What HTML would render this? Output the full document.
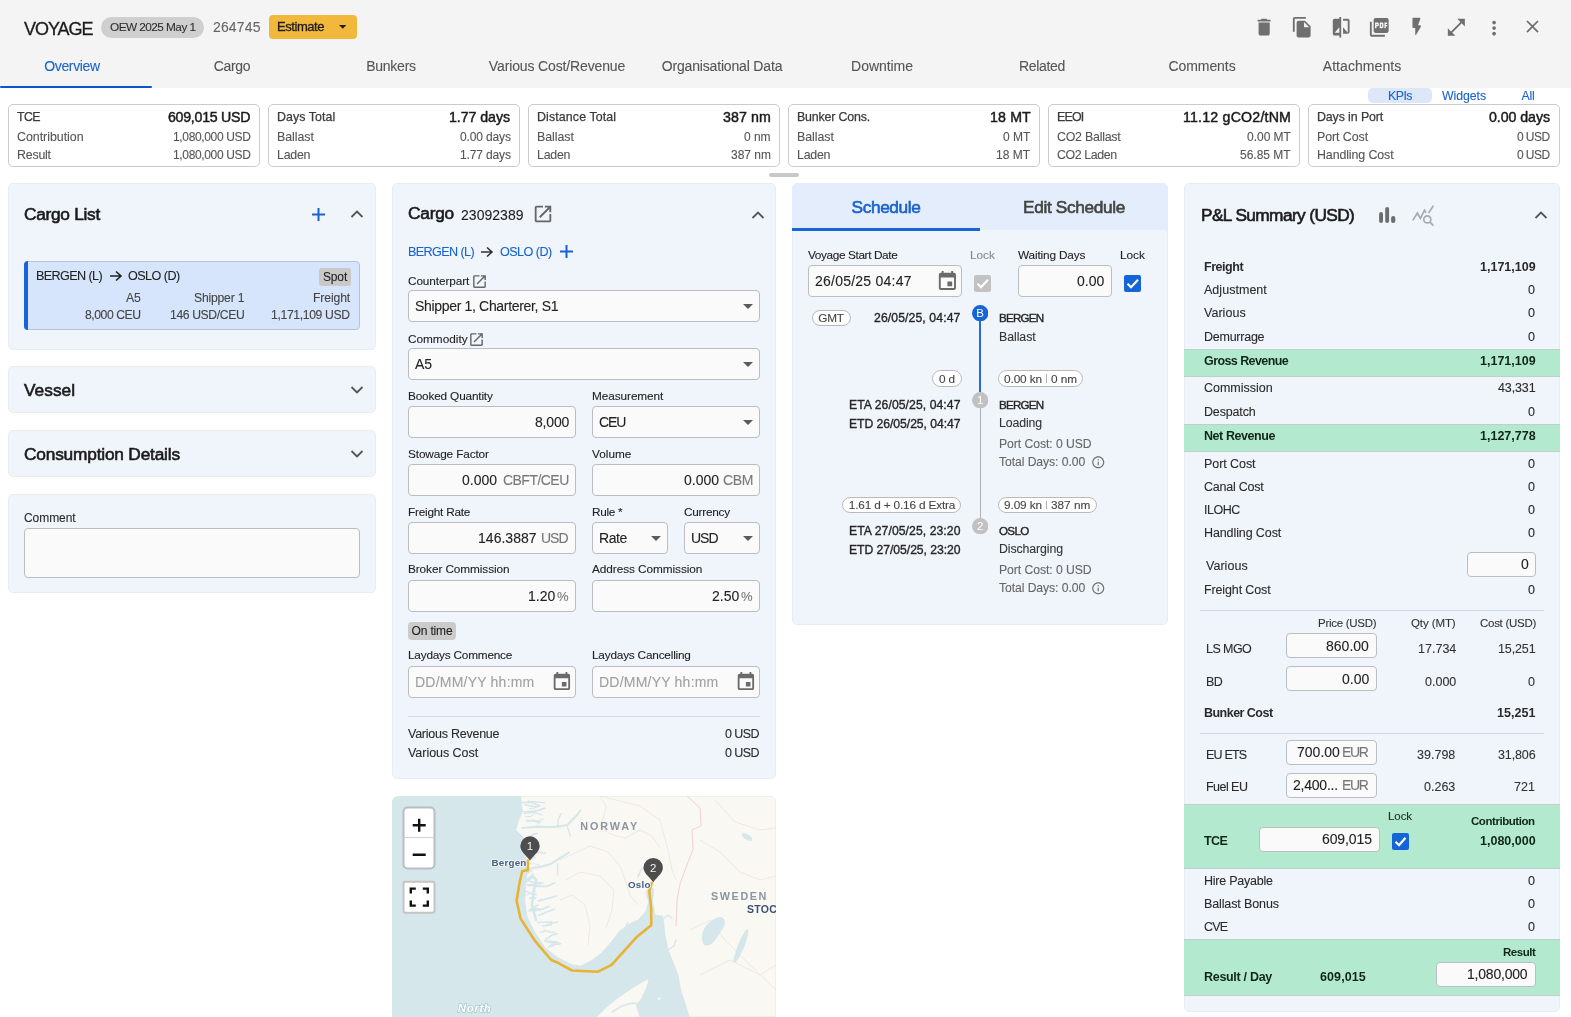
<!DOCTYPE html>
<html><head><meta charset="utf-8"><title>Voyage</title>
<style>
html,body{margin:0;padding:0;}
body{width:1571px;height:1017px;overflow:hidden;position:relative;background:#fff;font-family:"Liberation Sans",sans-serif;}
.t{position:absolute;white-space:nowrap;-webkit-font-smoothing:antialiased;will-change:transform;}
.b{position:absolute;}
</style></head><body>
<div class="b" style="left:0px;top:0px;width:1571px;height:88px;background:#f4f4f4;"></div>
<div class="t" style="top:19.76px;font-size:18px;line-height:18px;color:#1c1c1c;-webkit-text-stroke:0.3px #1c1c1c;letter-spacing:-1.032px;left:23.70px;">VOYAGE</div>
<div class="b" style="left:101px;top:17px;width:103px;height:21px;background:#cfcfcf;border-radius:11px;"></div>
<div class="t" style="top:22.11px;font-size:11.8px;line-height:11.8px;color:#2e2e2e;-webkit-text-stroke:0.1px #2e2e2e;letter-spacing:-0.544px;left:109.50px;">OEW 2025 May 1</div>
<div class="t" style="top:19.95px;font-size:14px;line-height:14px;color:#666;-webkit-text-stroke:0.1px #666;letter-spacing:0.148px;left:212.60px;">264745</div>
<div class="b" style="left:269px;top:15px;width:88px;height:24px;background:#f1b83b;border-radius:4px;"></div>
<div class="t" style="top:20.20px;font-size:13px;line-height:13px;color:#1e1e1e;-webkit-text-stroke:0.3px #1e1e1e;letter-spacing:-0.446px;left:277.00px;">Estimate</div>
<svg class="b" style="left:339.3px;top:25.45px;" width="7.4" height="3.7" viewBox="0 0 7.4 3.7"><path d="M0 0H7.4L3.7 3.7z" fill="#1e1e1e"/></svg>
<svg class="b" style="left:1253.15px;top:15.6px;" width="22.3" height="22.3" viewBox="0 0 24 24"><path fill="#6f6f6f" d="M6 19c0 1.1.9 2 2 2h8c1.1 0 2-.9 2-2V7H6v12zM19 4h-3.5l-1-1h-5l-1 1H5v2h14V4z"/></svg>
<svg class="b" style="left:1290.9px;top:15.97px;" width="22.4" height="22.4" viewBox="0 0 24 24"><path fill="#6f6f6f" d="M16 1H4c-1.1 0-2 .9-2 2v14h2V3h12V1zm-1 4l6 6v10c0 1.1-.9 2-2 2H7.99C6.89 23 6 22.1 6 21l.01-14c0-1.1.89-2 1.99-2h7zm-1 7h5.5L14 6.5V12z"/></svg>
<svg class="b" style="left:1330px;top:15.97px;" width="22.4" height="22.4" viewBox="0 0 24 24"><path fill="#6f6f6f" d="M10 3H5c-1.11 0-2 .9-2 2v14c0 1.1.89 2 2 2h5v2h2V1h-2v2zm0 15H5l5-6v6zm9-15h-5v2h5v13l-5-6v7h5c1.1 0 2-.9 2-2V5c0-1.1-.9-2-2-2z"/></svg>
<svg class="b" style="left:1367.9px;top:15.8px;" width="22.5" height="22.5" viewBox="0 0 24 24"><path fill="#6f6f6f" d="M20 2H8c-1.1 0-2 .9-2 2v12c0 1.1.9 2 2 2h12c1.1 0 2-.9 2-2V4c0-1.1-.9-2-2-2zm-8.5 7.5c0 .83-.67 1.5-1.5 1.5H9v2H7.5V7H10c.83 0 1.5.67 1.5 1.5v1zm5 2c0 .83-.67 1.5-1.5 1.5h-2.5V7H15c.83 0 1.5.67 1.5 1.5v3zm4-3H19v1h1.5V11H19v2h-1.5V7h3v1.5zM9 9.5h1v-1H9v1zM4 6H2v14c0 1.1.9 2 2 2h14v-2H4V6zm10 5.5h1v-3h-1v3z"/></svg>
<svg class="b" style="left:1405.8px;top:15.85px;" width="22.2" height="22.2" viewBox="0 0 24 24"><path fill="#6f6f6f" d="M7 3v9c0 .55.45 1 1 1h2v7.15c0 .51.67.69.93.25l5.19-8.9c.39-.67-.09-1.5-.86-1.5H13l2.49-6.65c.25-.65-.23-1.35-.93-1.35H8c-.55 0-1 .45-1 1z"/></svg>
<svg class="b" style="left:1444.6px;top:15.86px;" width="22.7" height="22.7" viewBox="0 0 24 24"><path fill="#6f6f6f" d="M21 11V3h-8l3.29 3.29-10 10L3 13v8h8l-3.29-3.29 10-10z"/></svg>
<svg class="b" style="left:1483.1px;top:16.5px;" width="22.2" height="22.2" viewBox="0 0 24 24"><path fill="#6f6f6f" d="M12 8c1.1 0 2-.9 2-2s-.9-2-2-2-2 .9-2 2 .9 2 2 2zm0 2c-1.1 0-2 .9-2 2s.9 2 2 2 2-.9 2-2-.9-2-2-2zm0 6c-1.1 0-2 .9-2 2s.9 2 2 2 2-.9 2-2-.9-2-2-2z"/></svg>
<svg class="b" style="left:1522.4px;top:16.3px;" width="21" height="21" viewBox="0 0 24 24"><path fill="#6f6f6f" d="M19 6.41L17.59 5 12 10.59 6.41 5 5 6.41 10.59 12 5 17.59 6.41 19 12 13.41 17.59 19 19 17.59 13.41 12z"/></svg>
<div class="t" style="top:59.45px;font-size:14px;line-height:14px;color:#1a62cc;-webkit-text-stroke:0.1px #1a62cc;letter-spacing:-0.349px;left:-328.42px;width:800px;text-align:center;">Overview</div>
<div class="t" style="top:59.45px;font-size:14px;line-height:14px;color:#555;-webkit-text-stroke:0.1px #555;letter-spacing:-0.295px;left:-168.45px;width:800px;text-align:center;">Cargo</div>
<div class="t" style="top:59.45px;font-size:14px;line-height:14px;color:#555;-webkit-text-stroke:0.1px #555;letter-spacing:-0.245px;left:-8.62px;width:800px;text-align:center;">Bunkers</div>
<div class="t" style="top:59.45px;font-size:14px;line-height:14px;color:#555;-webkit-text-stroke:0.1px #555;letter-spacing:-0.138px;left:156.93px;width:800px;text-align:center;">Various Cost/Revenue</div>
<div class="t" style="top:59.45px;font-size:14px;line-height:14px;color:#555;-webkit-text-stroke:0.1px #555;letter-spacing:-0.168px;left:321.92px;width:800px;text-align:center;">Organisational Data</div>
<div class="t" style="top:59.45px;font-size:14px;line-height:14px;color:#555;-webkit-text-stroke:0.1px #555;letter-spacing:-0.055px;left:481.97px;width:800px;text-align:center;">Downtime</div>
<div class="t" style="top:59.45px;font-size:14px;line-height:14px;color:#555;-webkit-text-stroke:0.1px #555;letter-spacing:-0.319px;left:642.24px;width:800px;text-align:center;">Related</div>
<div class="t" style="top:59.45px;font-size:14px;line-height:14px;color:#555;-webkit-text-stroke:0.1px #555;letter-spacing:-0.062px;left:802.17px;width:800px;text-align:center;">Comments</div>
<div class="t" style="top:59.45px;font-size:14px;line-height:14px;color:#555;-webkit-text-stroke:0.1px #555;letter-spacing:0.059px;left:962.03px;width:800px;text-align:center;">Attachments</div>
<div class="b" style="left:0px;top:86px;width:152px;height:2px;background:#0d55cc;border-radius:1px;"></div>
<div class="b" style="left:1368px;top:88px;width:64px;height:15px;background:#dce8fa;border-radius:5px;"></div>
<div class="t" style="top:89.79px;font-size:12.3px;line-height:12.3px;color:#1a62cc;-webkit-text-stroke:0.1px #1a62cc;letter-spacing:-0.494px;left:999.75px;width:800px;text-align:center;">KPIs</div>
<div class="t" style="top:89.79px;font-size:12.3px;line-height:12.3px;color:#1a62cc;-webkit-text-stroke:0.1px #1a62cc;letter-spacing:-0.061px;left:1063.97px;width:800px;text-align:center;">Widgets</div>
<div class="t" style="top:89.79px;font-size:12.3px;line-height:12.3px;color:#1a62cc;-webkit-text-stroke:0.1px #1a62cc;letter-spacing:-0.223px;left:1127.89px;width:800px;text-align:center;">All</div>
<div class="b" style="left:8px;top:104px;width:252px;height:63px;background:#fff;border:1px solid #cbcbcb;box-sizing:border-box;border-radius:5px;"></div>
<div class="t" style="top:110.70px;font-size:12.4px;line-height:12.4px;color:#3a3a3a;-webkit-text-stroke:0.25px #3a3a3a;letter-spacing:-0.652px;left:16.70px;">TCE</div>
<div class="t" style="top:109.98px;font-size:14.2px;line-height:14.2px;color:#1a1a1a;-webkit-text-stroke:0.45px #1a1a1a;letter-spacing:-0.271px;right:1320.77px;text-align:right;">609,015 USD</div>
<div class="t" style="top:130.50px;font-size:12.4px;line-height:12.4px;color:#555;-webkit-text-stroke:0.1px #555;letter-spacing:-0.019px;left:16.70px;">Contribution</div>
<div class="t" style="top:130.84px;font-size:12px;line-height:12px;color:#555;-webkit-text-stroke:0.1px #555;letter-spacing:-0.346px;right:1320.85px;text-align:right;">1,080,000 USD</div>
<div class="t" style="top:148.50px;font-size:12.4px;line-height:12.4px;color:#555;-webkit-text-stroke:0.1px #555;letter-spacing:-0.216px;left:16.70px;">Result</div>
<div class="t" style="top:148.84px;font-size:12px;line-height:12px;color:#555;-webkit-text-stroke:0.1px #555;letter-spacing:-0.346px;right:1320.85px;text-align:right;">1,080,000 USD</div>
<div class="b" style="left:268px;top:104px;width:252px;height:63px;background:#fff;border:1px solid #cbcbcb;box-sizing:border-box;border-radius:5px;"></div>
<div class="t" style="top:110.70px;font-size:12.4px;line-height:12.4px;color:#3a3a3a;-webkit-text-stroke:0.25px #3a3a3a;letter-spacing:0.072px;left:276.70px;">Days Total</div>
<div class="t" style="top:109.98px;font-size:14.2px;line-height:14.2px;color:#1a1a1a;-webkit-text-stroke:0.45px #1a1a1a;letter-spacing:-0.058px;right:1060.56px;text-align:right;">1.77 days</div>
<div class="t" style="top:130.50px;font-size:12.4px;line-height:12.4px;color:#555;-webkit-text-stroke:0.1px #555;letter-spacing:-0.040px;left:276.70px;">Ballast</div>
<div class="t" style="top:130.84px;font-size:12px;line-height:12px;color:#555;-webkit-text-stroke:0.1px #555;letter-spacing:-0.134px;right:1060.63px;text-align:right;">0.00 days</div>
<div class="t" style="top:148.50px;font-size:12.4px;line-height:12.4px;color:#555;-webkit-text-stroke:0.1px #555;letter-spacing:-0.259px;left:276.70px;">Laden</div>
<div class="t" style="top:148.84px;font-size:12px;line-height:12px;color:#555;-webkit-text-stroke:0.1px #555;letter-spacing:-0.134px;right:1060.63px;text-align:right;">1.77 days</div>
<div class="b" style="left:528px;top:104px;width:252px;height:63px;background:#fff;border:1px solid #cbcbcb;box-sizing:border-box;border-radius:5px;"></div>
<div class="t" style="top:110.70px;font-size:12.4px;line-height:12.4px;color:#3a3a3a;-webkit-text-stroke:0.25px #3a3a3a;letter-spacing:0.117px;left:536.70px;">Distance Total</div>
<div class="t" style="top:109.98px;font-size:14.2px;line-height:14.2px;color:#1a1a1a;-webkit-text-stroke:0.45px #1a1a1a;letter-spacing:0.100px;right:800.40px;text-align:right;">387 nm</div>
<div class="t" style="top:130.50px;font-size:12.4px;line-height:12.4px;color:#555;-webkit-text-stroke:0.1px #555;letter-spacing:-0.040px;left:536.70px;">Ballast</div>
<div class="t" style="top:130.84px;font-size:12px;line-height:12px;color:#555;-webkit-text-stroke:0.1px #555;letter-spacing:-0.055px;right:800.56px;text-align:right;">0 nm</div>
<div class="t" style="top:148.50px;font-size:12.4px;line-height:12.4px;color:#555;-webkit-text-stroke:0.1px #555;letter-spacing:-0.259px;left:536.70px;">Laden</div>
<div class="t" style="top:148.84px;font-size:12px;line-height:12px;color:#555;-webkit-text-stroke:0.1px #555;letter-spacing:-0.015px;right:800.52px;text-align:right;">387 nm</div>
<div class="b" style="left:788px;top:104px;width:252px;height:63px;background:#fff;border:1px solid #cbcbcb;box-sizing:border-box;border-radius:5px;"></div>
<div class="t" style="top:110.70px;font-size:12.4px;line-height:12.4px;color:#3a3a3a;-webkit-text-stroke:0.25px #3a3a3a;letter-spacing:-0.178px;left:796.70px;">Bunker Cons.</div>
<div class="t" style="top:109.98px;font-size:14.2px;line-height:14.2px;color:#1a1a1a;-webkit-text-stroke:0.45px #1a1a1a;letter-spacing:0.139px;right:540.36px;text-align:right;">18 MT</div>
<div class="t" style="top:130.50px;font-size:12.4px;line-height:12.4px;color:#555;-webkit-text-stroke:0.1px #555;letter-spacing:-0.040px;left:796.70px;">Ballast</div>
<div class="t" style="top:130.84px;font-size:12px;line-height:12px;color:#555;-webkit-text-stroke:0.1px #555;right:540.50px;text-align:right;">0 MT</div>
<div class="t" style="top:148.50px;font-size:12.4px;line-height:12.4px;color:#555;-webkit-text-stroke:0.1px #555;letter-spacing:-0.259px;left:796.70px;">Laden</div>
<div class="t" style="top:148.84px;font-size:12px;line-height:12px;color:#555;-webkit-text-stroke:0.1px #555;letter-spacing:0.015px;right:540.49px;text-align:right;">18 MT</div>
<div class="b" style="left:1048px;top:104px;width:252px;height:63px;background:#fff;border:1px solid #cbcbcb;box-sizing:border-box;border-radius:5px;"></div>
<div class="t" style="top:110.70px;font-size:12.4px;line-height:12.4px;color:#3a3a3a;-webkit-text-stroke:0.25px #3a3a3a;letter-spacing:-0.813px;left:1056.70px;">EEOI</div>
<div class="t" style="top:109.98px;font-size:14.2px;line-height:14.2px;color:#1a1a1a;-webkit-text-stroke:0.45px #1a1a1a;letter-spacing:0.193px;right:280.31px;text-align:right;">11.12 gCO2/tNM</div>
<div class="t" style="top:130.50px;font-size:12.4px;line-height:12.4px;color:#555;-webkit-text-stroke:0.1px #555;letter-spacing:-0.234px;left:1056.70px;">CO2 Ballast</div>
<div class="t" style="top:130.84px;font-size:12px;line-height:12px;color:#555;-webkit-text-stroke:0.1px #555;letter-spacing:-0.016px;right:280.52px;text-align:right;">0.00 MT</div>
<div class="t" style="top:148.50px;font-size:12.4px;line-height:12.4px;color:#555;-webkit-text-stroke:0.1px #555;letter-spacing:-0.399px;left:1056.70px;">CO2 Laden</div>
<div class="t" style="top:148.84px;font-size:12px;line-height:12px;color:#555;-webkit-text-stroke:0.1px #555;letter-spacing:-0.006px;right:280.51px;text-align:right;">56.85 MT</div>
<div class="b" style="left:1308px;top:104px;width:252px;height:63px;background:#fff;border:1px solid #cbcbcb;box-sizing:border-box;border-radius:5px;"></div>
<div class="t" style="top:110.70px;font-size:12.4px;line-height:12.4px;color:#3a3a3a;-webkit-text-stroke:0.25px #3a3a3a;letter-spacing:-0.110px;left:1316.70px;">Days in Port</div>
<div class="t" style="top:109.98px;font-size:14.2px;line-height:14.2px;color:#1a1a1a;-webkit-text-stroke:0.45px #1a1a1a;letter-spacing:-0.058px;right:20.56px;text-align:right;">0.00 days</div>
<div class="t" style="top:130.50px;font-size:12.4px;line-height:12.4px;color:#555;-webkit-text-stroke:0.1px #555;letter-spacing:-0.069px;left:1316.70px;">Port Cost</div>
<div class="t" style="top:130.84px;font-size:12px;line-height:12px;color:#555;-webkit-text-stroke:0.1px #555;letter-spacing:-0.571px;right:21.07px;text-align:right;">0 USD</div>
<div class="t" style="top:148.50px;font-size:12.4px;line-height:12.4px;color:#555;-webkit-text-stroke:0.1px #555;letter-spacing:-0.105px;left:1316.70px;">Handling Cost</div>
<div class="t" style="top:148.84px;font-size:12px;line-height:12px;color:#555;-webkit-text-stroke:0.1px #555;letter-spacing:-0.571px;right:21.07px;text-align:right;">0 USD</div>
<div class="b" style="left:769px;top:173px;width:30px;height:4px;background:#c8c8c8;border-radius:2px;"></div>
<div class="b" style="left:8px;top:183px;width:368px;height:167px;background:#f0f5fc;border:1px solid #e8edf4;box-sizing:border-box;border-radius:5px;"></div>
<div class="t" style="top:205.96px;font-size:17.3px;line-height:17.3px;color:#1a1a1a;-webkit-text-stroke:0.6px #1a1a1a;letter-spacing:-0.284px;left:24.20px;">Cargo List</div>
<svg class="b" style="left:311.5px;top:208.0px;" width="13" height="13" viewBox="0 0 13 13"><path d="M6.5 0V13M0 6.5H13" stroke="#1a62cc" stroke-width="2" fill="none"/></svg>
<svg class="b" style="left:350px;top:209px;" width="14" height="10" viewBox="0 0 14 10"><path d="M1.5 8 L7 2.5 L12.5 8" fill="none" stroke="#555" stroke-width="1.8"/></svg>
<div class="b" style="left:24px;top:261px;width:336px;height:69px;background:#d6e5fb;border:1px solid #b7c3d3;box-sizing:border-box;border-radius:4px;"></div>
<div class="b" style="left:24px;top:261px;width:4px;height:69px;background:#1565d8;border-radius:4px 0 0 4px;"></div>
<div class="t" style="top:269.73px;font-size:12.6px;line-height:12.6px;color:#222;-webkit-text-stroke:0.1px #222;letter-spacing:-0.602px;left:36.00px;">BERGEN (L)</div>
<svg class="b" style="left:109px;top:270px;" width="14" height="12" viewBox="0 0 14 12"><path d="M1 6H12M7 1.5L12 6L7 10.5" stroke="#222" stroke-width="1.6" fill="none"/></svg>
<div class="t" style="top:269.73px;font-size:12.6px;line-height:12.6px;color:#222;-webkit-text-stroke:0.1px #222;letter-spacing:-0.540px;left:127.50px;">OSLO (D)</div>
<div class="b" style="left:319px;top:268px;width:32px;height:18px;background:#c9c9c9;border-radius:3px;"></div>
<div class="t" style="top:271.34px;font-size:12px;line-height:12px;color:#222;-webkit-text-stroke:0.1px #222;letter-spacing:-0.117px;left:-65.06px;width:800px;text-align:center;">Spot</div>
<div class="t" style="top:292.17px;font-size:12.2px;line-height:12.2px;color:#444;-webkit-text-stroke:0.1px #444;letter-spacing:-0.059px;right:1430.56px;text-align:right;">A5</div>
<div class="t" style="top:292.17px;font-size:12.2px;line-height:12.2px;color:#444;-webkit-text-stroke:0.1px #444;letter-spacing:-0.218px;right:1326.42px;text-align:right;">Shipper 1</div>
<div class="t" style="top:292.17px;font-size:12.2px;line-height:12.2px;color:#444;-webkit-text-stroke:0.1px #444;letter-spacing:-0.124px;right:1221.12px;text-align:right;">Freight</div>
<div class="t" style="top:308.87px;font-size:12.2px;line-height:12.2px;color:#444;-webkit-text-stroke:0.1px #444;letter-spacing:-0.457px;right:1430.96px;text-align:right;">8,000 CEU</div>
<div class="t" style="top:308.87px;font-size:12.2px;line-height:12.2px;color:#444;-webkit-text-stroke:0.1px #444;letter-spacing:-0.384px;right:1326.58px;text-align:right;">146 USD/CEU</div>
<div class="t" style="top:308.87px;font-size:12.2px;line-height:12.2px;color:#444;-webkit-text-stroke:0.1px #444;letter-spacing:-0.352px;right:1221.35px;text-align:right;">1,171,109 USD</div>
<div class="b" style="left:8px;top:366px;width:368px;height:47px;background:#f0f5fc;border:1px solid #e8edf4;box-sizing:border-box;border-radius:5px;"></div>
<div class="t" style="top:381.66px;font-size:17.3px;line-height:17.3px;color:#1a1a1a;-webkit-text-stroke:0.6px #1a1a1a;letter-spacing:0.027px;left:24.20px;">Vessel</div>
<svg class="b" style="left:350px;top:385px;" width="14" height="10" viewBox="0 0 14 10"><path d="M1.5 2 L7 7.5 L12.5 2" fill="none" stroke="#555" stroke-width="1.8"/></svg>
<div class="b" style="left:8px;top:430px;width:368px;height:47px;background:#f0f5fc;border:1px solid #e8edf4;box-sizing:border-box;border-radius:5px;"></div>
<div class="t" style="top:446.16px;font-size:17.3px;line-height:17.3px;color:#1a1a1a;-webkit-text-stroke:0.6px #1a1a1a;letter-spacing:-0.190px;left:24.20px;">Consumption Details</div>
<svg class="b" style="left:350px;top:449px;" width="14" height="10" viewBox="0 0 14 10"><path d="M1.5 2 L7 7.5 L12.5 2" fill="none" stroke="#555" stroke-width="1.8"/></svg>
<div class="b" style="left:8px;top:494px;width:368px;height:99px;background:#f0f5fc;border:1px solid #e8edf4;box-sizing:border-box;border-radius:5px;"></div>
<div class="t" style="top:512.04px;font-size:12px;line-height:12px;color:#2a2a2a;-webkit-text-stroke:0.1px #2a2a2a;letter-spacing:-0.066px;left:24.20px;">Comment</div>
<div class="b" style="left:24px;top:528px;width:336px;height:50px;background:#fafafa;border:1px solid #babec2;box-sizing:border-box;border-radius:4px;"></div>
<div class="b" style="left:392px;top:183px;width:384px;height:596px;background:#f0f5fc;border:1px solid #e8edf4;box-sizing:border-box;border-radius:5px;"></div>
<div class="t" style="top:205.16px;font-size:17.3px;line-height:17.3px;color:#1a1a1a;-webkit-text-stroke:0.6px #1a1a1a;letter-spacing:-0.229px;left:408.40px;">Cargo</div>
<div class="t" style="top:207.95px;font-size:14px;line-height:14px;color:#222;-webkit-text-stroke:0.1px #222;letter-spacing:0.027px;left:461.00px;">23092389</div>
<svg class="b" style="left:532px;top:203px;" width="22" height="22" viewBox="0 0 24 24"><path fill="#666" d="M19 19H5V5h7V3H5c-1.11 0-2 .9-2 2v14c0 1.1.89 2 2 2h14c1.1 0 2-.9 2-2v-7h-2v7zM14 3v2h3.59l-9.83 9.83 1.41 1.41L19 6.41V10h2V3h-7z"/></svg>
<svg class="b" style="left:750.5px;top:209.5px;" width="14" height="10" viewBox="0 0 14 10"><path d="M1.5 8 L7 2.5 L12.5 8" fill="none" stroke="#555" stroke-width="1.8"/></svg>
<div class="t" style="top:245.73px;font-size:12.6px;line-height:12.6px;color:#1a62cc;-webkit-text-stroke:0.1px #1a62cc;letter-spacing:-0.602px;left:408.40px;">BERGEN (L)</div>
<svg class="b" style="left:480px;top:246px;" width="14" height="12" viewBox="0 0 14 12"><path d="M1 6H12M7 1.5L12 6L7 10.5" stroke="#333" stroke-width="1.6" fill="none"/></svg>
<div class="t" style="top:245.73px;font-size:12.6px;line-height:12.6px;color:#1a62cc;-webkit-text-stroke:0.1px #1a62cc;letter-spacing:-0.540px;left:500.00px;">OSLO (D)</div>
<svg class="b" style="left:559.9px;top:245.0px;" width="13" height="13" viewBox="0 0 13 13"><path d="M6.5 0V13M0 6.5H13" stroke="#1a62cc" stroke-width="2" fill="none"/></svg>
<div class="t" style="top:275.51px;font-size:11.8px;line-height:11.8px;color:#222;-webkit-text-stroke:0.1px #222;letter-spacing:-0.105px;left:408.40px;">Counterpart</div>
<svg class="b" style="left:471px;top:273px;" width="17" height="17" viewBox="0 0 24 24"><path fill="#666" d="M19 19H5V5h7V3H5c-1.11 0-2 .9-2 2v14c0 1.1.89 2 2 2h14c1.1 0 2-.9 2-2v-7h-2v7zM14 3v2h3.59l-9.83 9.83 1.41 1.41L19 6.41V10h2V3h-7z"/></svg>
<div class="b" style="left:408px;top:290px;width:352px;height:32px;background:#fafafa;border:1px solid #babec2;box-sizing:border-box;border-radius:4px;"></div>
<div class="t" style="top:298.75px;font-size:14px;line-height:14px;color:#222;-webkit-text-stroke:0.1px #222;letter-spacing:-0.327px;left:415.00px;">Shipper 1, Charterer, S1</div>
<svg class="b" style="left:743.0px;top:303.5px;" width="10" height="5.0" viewBox="0 0 10 5.0"><path d="M0 0H10L5.0 5.0z" fill="#5a5a5a"/></svg>
<div class="t" style="top:333.71px;font-size:11.8px;line-height:11.8px;color:#222;-webkit-text-stroke:0.1px #222;letter-spacing:-0.014px;left:408.40px;">Commodity</div>
<svg class="b" style="left:468px;top:331px;" width="17" height="17" viewBox="0 0 24 24"><path fill="#666" d="M19 19H5V5h7V3H5c-1.11 0-2 .9-2 2v14c0 1.1.89 2 2 2h14c1.1 0 2-.9 2-2v-7h-2v7zM14 3v2h3.59l-9.83 9.83 1.41 1.41L19 6.41V10h2V3h-7z"/></svg>
<div class="b" style="left:408px;top:348px;width:352px;height:32px;background:#fafafa;border:1px solid #babec2;box-sizing:border-box;border-radius:4px;"></div>
<div class="t" style="top:356.75px;font-size:14px;line-height:14px;color:#222;-webkit-text-stroke:0.1px #222;letter-spacing:-0.067px;left:415.00px;">A5</div>
<svg class="b" style="left:743.0px;top:361.5px;" width="10" height="5.0" viewBox="0 0 10 5.0"><path d="M0 0H10L5.0 5.0z" fill="#5a5a5a"/></svg>
<div class="t" style="top:391.21px;font-size:11.8px;line-height:11.8px;color:#222;-webkit-text-stroke:0.1px #222;letter-spacing:-0.167px;left:408.40px;">Booked Quantity</div>
<div class="b" style="left:408px;top:406px;width:168px;height:32px;background:#fafafa;border:1px solid #babec2;box-sizing:border-box;border-radius:4px;"></div>
<div class="t" style="top:414.95px;font-size:14px;line-height:14px;color:#222;-webkit-text-stroke:0.1px #222;letter-spacing:-0.177px;right:1002.18px;text-align:right;">8,000</div>
<div class="t" style="top:391.21px;font-size:11.8px;line-height:11.8px;color:#222;-webkit-text-stroke:0.1px #222;letter-spacing:-0.076px;left:592.00px;">Measurement</div>
<div class="b" style="left:592px;top:406px;width:168px;height:32px;background:#fafafa;border:1px solid #babec2;box-sizing:border-box;border-radius:4px;"></div>
<div class="t" style="top:414.95px;font-size:14px;line-height:14px;color:#222;-webkit-text-stroke:0.1px #222;letter-spacing:-1.141px;left:599.00px;">CEU</div>
<svg class="b" style="left:743.0px;top:419.5px;" width="10" height="5.0" viewBox="0 0 10 5.0"><path d="M0 0H10L5.0 5.0z" fill="#5a5a5a"/></svg>
<div class="t" style="top:448.71px;font-size:11.8px;line-height:11.8px;color:#222;-webkit-text-stroke:0.1px #222;letter-spacing:-0.129px;left:408.40px;">Stowage Factor</div>
<div class="b" style="left:408px;top:464px;width:168px;height:32px;background:#fafafa;border:1px solid #babec2;box-sizing:border-box;border-radius:4px;"></div>
<div class="t" style="top:472.95px;font-size:14px;line-height:14px;color:#777;-webkit-text-stroke:0.1px #777;letter-spacing:-0.537px;right:1002.54px;text-align:right;">CBFT/CEU</div>
<div class="t" style="top:472.95px;font-size:14px;line-height:14px;color:#222;-webkit-text-stroke:0.1px #222;right:1074.00px;text-align:right;">0.000</div>
<div class="t" style="top:448.71px;font-size:11.8px;line-height:11.8px;color:#222;-webkit-text-stroke:0.1px #222;letter-spacing:0.013px;left:592.00px;">Volume</div>
<div class="b" style="left:592px;top:464px;width:168px;height:32px;background:#fafafa;border:1px solid #babec2;box-sizing:border-box;border-radius:4px;"></div>
<div class="t" style="top:472.95px;font-size:14px;line-height:14px;color:#777;-webkit-text-stroke:0.1px #777;letter-spacing:-0.351px;right:818.35px;text-align:right;">CBM</div>
<div class="t" style="top:472.95px;font-size:14px;line-height:14px;color:#222;-webkit-text-stroke:0.1px #222;right:852.00px;text-align:right;">0.000</div>
<div class="t" style="top:506.51px;font-size:11.8px;line-height:11.8px;color:#222;-webkit-text-stroke:0.1px #222;letter-spacing:-0.226px;left:408.40px;">Freight Rate</div>
<div class="b" style="left:408px;top:522px;width:168px;height:32px;background:#fafafa;border:1px solid #babec2;box-sizing:border-box;border-radius:4px;"></div>
<div class="t" style="top:530.95px;font-size:14px;line-height:14px;color:#777;-webkit-text-stroke:0.1px #777;letter-spacing:-0.996px;right:1003.00px;text-align:right;">USD</div>
<div class="t" style="top:530.95px;font-size:14px;line-height:14px;color:#222;-webkit-text-stroke:0.1px #222;letter-spacing:0.030px;right:1033.97px;text-align:right;">146.3887</div>
<div class="t" style="top:506.51px;font-size:11.8px;line-height:11.8px;color:#222;-webkit-text-stroke:0.1px #222;letter-spacing:-0.288px;left:592.00px;">Rule *</div>
<div class="b" style="left:592px;top:522px;width:76px;height:32px;background:#fafafa;border:1px solid #babec2;box-sizing:border-box;border-radius:4px;"></div>
<div class="t" style="top:530.55px;font-size:14px;line-height:14px;color:#222;-webkit-text-stroke:0.1px #222;letter-spacing:-0.452px;left:599.00px;">Rate</div>
<svg class="b" style="left:651.0px;top:535.5px;" width="10" height="5.0" viewBox="0 0 10 5.0"><path d="M0 0H10L5.0 5.0z" fill="#5a5a5a"/></svg>
<div class="t" style="top:506.51px;font-size:11.8px;line-height:11.8px;color:#222;-webkit-text-stroke:0.1px #222;letter-spacing:-0.260px;left:684.00px;">Currency</div>
<div class="b" style="left:684px;top:522px;width:76px;height:32px;background:#fafafa;border:1px solid #babec2;box-sizing:border-box;border-radius:4px;"></div>
<div class="t" style="top:530.55px;font-size:14px;line-height:14px;color:#222;-webkit-text-stroke:0.1px #222;letter-spacing:-0.996px;left:691.00px;">USD</div>
<svg class="b" style="left:743.0px;top:535.5px;" width="10" height="5.0" viewBox="0 0 10 5.0"><path d="M0 0H10L5.0 5.0z" fill="#5a5a5a"/></svg>
<div class="t" style="top:564.41px;font-size:11.8px;line-height:11.8px;color:#222;-webkit-text-stroke:0.1px #222;letter-spacing:-0.087px;left:408.40px;">Broker Commission</div>
<div class="b" style="left:408px;top:580px;width:168px;height:32px;background:#fafafa;border:1px solid #babec2;box-sizing:border-box;border-radius:4px;"></div>
<div class="t" style="top:589.80px;font-size:13px;line-height:13px;color:#777;-webkit-text-stroke:0.1px #777;letter-spacing:-2.265px;right:1004.26px;text-align:right;">%</div>
<div class="t" style="top:588.95px;font-size:14px;line-height:14px;color:#222;-webkit-text-stroke:0.1px #222;letter-spacing:-0.016px;right:1016.02px;text-align:right;">1.20</div>
<div class="t" style="top:564.41px;font-size:11.8px;line-height:11.8px;color:#222;-webkit-text-stroke:0.1px #222;letter-spacing:-0.062px;left:592.00px;">Address Commission</div>
<div class="b" style="left:592px;top:580px;width:168px;height:32px;background:#fafafa;border:1px solid #babec2;box-sizing:border-box;border-radius:4px;"></div>
<div class="t" style="top:589.80px;font-size:13px;line-height:13px;color:#777;-webkit-text-stroke:0.1px #777;letter-spacing:-2.265px;right:820.26px;text-align:right;">%</div>
<div class="t" style="top:588.95px;font-size:14px;line-height:14px;color:#222;-webkit-text-stroke:0.1px #222;letter-spacing:-0.016px;right:832.02px;text-align:right;">2.50</div>
<div class="b" style="left:408px;top:622px;width:48px;height:18px;background:#cbcbcb;border-radius:4px;"></div>
<div class="t" style="top:625.24px;font-size:12px;line-height:12px;color:#222;-webkit-text-stroke:0.1px #222;letter-spacing:-0.168px;left:31.92px;width:800px;text-align:center;">On time</div>
<div class="t" style="top:650.41px;font-size:11.8px;line-height:11.8px;color:#222;-webkit-text-stroke:0.1px #222;letter-spacing:-0.211px;left:408.40px;">Laydays Commence</div>
<div class="b" style="left:408px;top:666px;width:168px;height:32px;background:#fafafa;border:1px solid #babec2;box-sizing:border-box;border-radius:4px;"></div>
<div class="t" style="top:674.85px;font-size:14px;line-height:14px;color:#a0a0a0;-webkit-text-stroke:0.1px #a0a0a0;letter-spacing:0.220px;left:415.00px;">DD/MM/YY hh:mm</div>
<svg class="b" style="left:551.3px;top:671.4px;" width="21.8" height="21.8" viewBox="0 0 24 24"><path fill="#6a6a6a" d="M17 12h-5v5h5v-5zM16 1v2H8V1H6v2H5c-1.11 0-1.99.9-1.99 2L3 19c0 1.1.89 2 2 2h14c1.1 0 2-.9 2-2V5c0-1.1-.9-2-2-2h-1V1h-2zm3 18H5V8h14v11z"/></svg>
<div class="t" style="top:650.41px;font-size:11.8px;line-height:11.8px;color:#222;-webkit-text-stroke:0.1px #222;letter-spacing:-0.200px;left:592.00px;">Laydays Cancelling</div>
<div class="b" style="left:592px;top:666px;width:168px;height:32px;background:#fafafa;border:1px solid #babec2;box-sizing:border-box;border-radius:4px;"></div>
<div class="t" style="top:674.85px;font-size:14px;line-height:14px;color:#a0a0a0;-webkit-text-stroke:0.1px #a0a0a0;letter-spacing:0.220px;left:599.00px;">DD/MM/YY hh:mm</div>
<svg class="b" style="left:735.3px;top:671.4px;" width="21.8" height="21.8" viewBox="0 0 24 24"><path fill="#6a6a6a" d="M17 12h-5v5h5v-5zM16 1v2H8V1H6v2H5c-1.11 0-1.99.9-1.99 2L3 19c0 1.1.89 2 2 2h14c1.1 0 2-.9 2-2V5c0-1.1-.9-2-2-2h-1V1h-2zm3 18H5V8h14v11z"/></svg>
<div class="b" style="left:408px;top:716px;width:352px;height:1px;background:#d3d9e2;"></div>
<div class="t" style="top:728.22px;font-size:12.5px;line-height:12.5px;color:#2a2a2a;-webkit-text-stroke:0.1px #2a2a2a;letter-spacing:-0.247px;left:408.40px;">Various Revenue</div>
<div class="t" style="top:728.22px;font-size:12.5px;line-height:12.5px;color:#2a2a2a;-webkit-text-stroke:0.1px #2a2a2a;letter-spacing:-0.595px;right:812.09px;text-align:right;">0 USD</div>
<div class="t" style="top:747.12px;font-size:12.5px;line-height:12.5px;color:#2a2a2a;-webkit-text-stroke:0.1px #2a2a2a;letter-spacing:-0.039px;left:408.40px;">Various Cost</div>
<div class="t" style="top:747.12px;font-size:12.5px;line-height:12.5px;color:#2a2a2a;-webkit-text-stroke:0.1px #2a2a2a;letter-spacing:-0.595px;right:812.09px;text-align:right;">0 USD</div>
<svg class="b" style="left:392px;top:796px;border-radius:6px 6px 0 0;overflow:hidden" width="384" height="221" viewBox="0 0 384 221">
<rect width="384" height="221" fill="#d5e7eb"/>
<polygon points="128.6,0.0 130.3,16.0 126.0,26.0 123.8,33.9 131.9,42.0 133.5,64.5 135.0,75.8 133.5,90.3 132.7,104.8 135.0,121.0 143.2,137.0 148.0,144.0 152.8,151.6 164.6,161.1 180.0,168.8 188.9,170.0 199.1,165.0 209.3,157.3 219.6,145.8 227.2,135.6 237.5,127.9 246.4,124.0 254.0,115.1 256.6,106.2 254.0,96.0 258.0,89.6 261.7,93.4 260.5,106.2 263.0,119.0 270.7,120.2 272.0,130.5 273.2,140.7 275.8,153.5 281.0,166.2 286.0,179.0 288.6,194.0 293.0,207.0 297.0,221.0 384.0,221.0 384.0,0.0" fill="#faf8f3" stroke="#cfe0e4" stroke-width="0.6"/>
<polygon points="205.0,221.0 214.0,212.0 226.0,202.0 238.0,194.0 249.0,187.0 256.6,183.0 254.0,192.0 250.0,201.0 244.0,210.0 247.6,221.0" fill="#faf8f3"/>
<polyline points="220.0,216.0 230.0,210.0 240.0,207.0 248.0,208.0" fill="none" stroke="#d5e7eb" stroke-width="1.6"/>
<polyline points="208.0,0.0 214.0,10.0 212.0,20.0 208.0,30.0 218.0,38.0 233.0,42.0 248.0,34.0 260.0,40.0 268.0,52.0" fill="none" stroke="#e6e3dc" stroke-width="0.7"/>
<polyline points="168.0,64.0 183.0,57.0 198.0,50.0 216.0,56.0 228.0,70.0 233.0,84.0 238.0,99.0 246.0,109.0" fill="none" stroke="#e6e3dc" stroke-width="0.7"/>
<polyline points="174.0,84.0 188.0,76.0 208.0,80.0 222.0,94.0 220.0,114.0 214.0,132.0" fill="none" stroke="#e6e3dc" stroke-width="0.7"/>
<polyline points="168.0,104.0 180.0,99.0 193.0,109.0 198.0,129.0 196.0,149.0" fill="none" stroke="#e6e3dc" stroke-width="0.7"/>
<polyline points="208.0,0.0 248.0,10.0 268.0,24.0 276.0,54.0 280.0,74.0 284.0,84.0" fill="none" stroke="#e6e3dc" stroke-width="0.7"/>
<polyline points="308.0,44.0 328.0,56.0 348.0,76.0 368.0,84.0 384.0,80.0" fill="none" stroke="#e6e3dc" stroke-width="0.7"/>
<polyline points="298.0,134.0 318.0,124.0 333.0,144.0 353.0,164.0 384.0,194.0" fill="none" stroke="#e6e3dc" stroke-width="0.7"/>
<polyline points="323.0,4.0 343.0,26.0 368.0,34.0 384.0,32.0" fill="none" stroke="#e6e3dc" stroke-width="0.7"/>
<polyline points="308.0,179.0 338.0,164.0 368.0,179.0 384.0,169.0" fill="none" stroke="#e6e3dc" stroke-width="0.7"/>
<polyline points="295.0,0.0 308.0,12.0 309.0,30.0 300.0,34.0 301.0,54.0 296.0,66.0 288.0,88.0 285.0,104.0 284.0,130.0" fill="none" stroke="#ecc6cf" stroke-width="0.8"/>
<polyline points="130.0,32.0 146.0,30.6 156.0,31.0 165.7,30.6 175.4,29.0 180.0,24.0 185.0,19.4 188.3,14.5" fill="none" stroke="#d5e7eb" stroke-width="2.2" stroke-linejoin="round" stroke-linecap="round"/>
<polyline points="165.7,30.0 166.0,24.0 169.0,17.7" fill="none" stroke="#d5e7eb" stroke-width="1.4" stroke-linejoin="round" stroke-linecap="round"/>
<polyline points="175.4,31.0 177.0,36.0 178.6,40.3" fill="none" stroke="#d5e7eb" stroke-width="1.4" stroke-linejoin="round" stroke-linecap="round"/>
<polyline points="130.0,6.5 140.0,6.5 148.0,10.0" fill="none" stroke="#d5e7eb" stroke-width="1.6" stroke-linejoin="round" stroke-linecap="round"/>
<polyline points="132.0,16.0 146.4,14.5 153.0,12.0" fill="none" stroke="#d5e7eb" stroke-width="1.6" stroke-linejoin="round" stroke-linecap="round"/>
<polyline points="138.3,72.6 148.0,71.0 159.3,67.7 169.0,61.3 177.0,56.5" fill="none" stroke="#d5e7eb" stroke-width="2.0" stroke-linejoin="round" stroke-linecap="round"/>
<polyline points="165.7,67.7 165.7,79.0" fill="none" stroke="#d5e7eb" stroke-width="1.3" stroke-linejoin="round" stroke-linecap="round"/>
<polyline points="143.0,90.3 154.5,90.3 162.5,87.0" fill="none" stroke="#d5e7eb" stroke-width="1.8" stroke-linejoin="round" stroke-linecap="round"/>
<polyline points="146.4,104.8 159.3,101.6 164.0,100.0" fill="none" stroke="#d5e7eb" stroke-width="1.8" stroke-linejoin="round" stroke-linecap="round"/>
<polyline points="146.4,119.4 162.5,113.0" fill="none" stroke="#d5e7eb" stroke-width="1.6" stroke-linejoin="round" stroke-linecap="round"/>
<polyline points="154.5,129.0 165.7,125.8" fill="none" stroke="#d5e7eb" stroke-width="1.4" stroke-linejoin="round" stroke-linecap="round"/>
<polyline points="136.0,84.0 141.0,80.0 144.0,84.0 142.0,94.0 140.0,109.0 144.0,124.0" fill="none" stroke="#d5e7eb" stroke-width="2.6" stroke-linejoin="round" stroke-linecap="round"/>
<polyline points="246.0,80.6 249.0,74.0 253.0,70.0" fill="none" stroke="#d5e7eb" stroke-width="1.6" stroke-linejoin="round" stroke-linecap="round"/>
<polyline points="208.0,166.0 206.0,162.0" fill="none" stroke="#d5e7eb" stroke-width="1.2" stroke-linejoin="round" stroke-linecap="round"/>
<polyline points="233.0,132.0 236.0,126.0" fill="none" stroke="#d5e7eb" stroke-width="1.2" stroke-linejoin="round" stroke-linecap="round"/>
<polyline points="270.0,124.0 276.0,119.0 280.0,122.0" fill="none" stroke="#d5e7eb" stroke-width="1.4" stroke-linejoin="round" stroke-linecap="round"/>
<polyline points="276.0,154.0 282.0,150.0 284.0,144.0" fill="none" stroke="#d5e7eb" stroke-width="1.4" stroke-linejoin="round" stroke-linecap="round"/>
<polyline points="133.1,76.3 136.8,74.2 139.6,72.5 142.3,70.7" fill="none" stroke="#d5e7eb" stroke-width="0.9628698812171571" stroke-linejoin="round" stroke-linecap="round"/>
<polyline points="135.0,50.2 138.8,48.7 144.0,47.1 148.2,46.5" fill="none" stroke="#d5e7eb" stroke-width="0.9419244125559807" stroke-linejoin="round" stroke-linecap="round"/>
<polyline points="148.5,136.1 150.1,136.1 151.5,135.4 153.8,134.3" fill="none" stroke="#d5e7eb" stroke-width="1.392970019138602" stroke-linejoin="round" stroke-linecap="round"/>
<polyline points="132.4,47.0 134.7,46.9 137.3,47.0 139.3,48.0" fill="none" stroke="#d5e7eb" stroke-width="1.5290949903566142" stroke-linejoin="round" stroke-linecap="round"/>
<polyline points="136.0,67.3 139.9,67.8 144.3,68.0 147.6,69.6" fill="none" stroke="#d5e7eb" stroke-width="1.0367860811944543" stroke-linejoin="round" stroke-linecap="round"/>
<polyline points="132.3,94.8 136.5,96.4 140.1,97.7 144.4,98.6" fill="none" stroke="#d5e7eb" stroke-width="1.3105847981712717" stroke-linejoin="round" stroke-linecap="round"/>
<polyline points="152.1,134.1 154.7,134.9 158.3,136.4 162.4,136.2" fill="none" stroke="#d5e7eb" stroke-width="1.2472122982020397" stroke-linejoin="round" stroke-linecap="round"/>
<polyline points="137.1,114.9 139.4,112.7 143.1,110.6 145.8,109.2" fill="none" stroke="#d5e7eb" stroke-width="1.6842797767136695" stroke-linejoin="round" stroke-linecap="round"/>
<polyline points="135.1,49.0 139.3,51.0 142.4,51.8 145.6,53.8" fill="none" stroke="#d5e7eb" stroke-width="1.7619580835675923" stroke-linejoin="round" stroke-linecap="round"/>
<polyline points="133.2,56.9 135.6,56.4 137.6,54.5 139.8,53.5" fill="none" stroke="#d5e7eb" stroke-width="1.4097071013357527" stroke-linejoin="round" stroke-linecap="round"/>
<polyline points="156.1,146.7 160.0,145.9 164.3,146.7 168.6,147.7" fill="none" stroke="#d5e7eb" stroke-width="1.2531410162021417" stroke-linejoin="round" stroke-linecap="round"/>
<polyline points="132.7,84.7 135.5,82.3 138.4,80.2 141.1,77.3" fill="none" stroke="#d5e7eb" stroke-width="1.0361384390514852" stroke-linejoin="round" stroke-linecap="round"/>
<polyline points="134.5,51.4 136.5,51.0 137.7,51.2 139.1,50.7" fill="none" stroke="#d5e7eb" stroke-width="1.6640432338361535" stroke-linejoin="round" stroke-linecap="round"/>
<polyline points="156.5,151.2 158.9,149.4 161.5,148.8 164.0,146.3" fill="none" stroke="#d5e7eb" stroke-width="1.755887015587232" stroke-linejoin="round" stroke-linecap="round"/>
<polyline points="133.0,99.2 136.3,98.6 140.3,97.4 143.1,95.4" fill="none" stroke="#d5e7eb" stroke-width="1.0503378310809026" stroke-linejoin="round" stroke-linecap="round"/>
<polyline points="145.8,126.5 149.7,126.3 155.1,126.2 160.2,126.1" fill="none" stroke="#d5e7eb" stroke-width="1.5658857183381427" stroke-linejoin="round" stroke-linecap="round"/>
<polyline points="135.6,65.4 137.3,63.5 139.5,62.6 143.0,61.1" fill="none" stroke="#d5e7eb" stroke-width="1.743319081148618" stroke-linejoin="round" stroke-linecap="round"/>
<polyline points="159.7,150.7 162.0,149.0 164.3,148.4 167.9,148.4" fill="none" stroke="#d5e7eb" stroke-width="1.3315260836353844" stroke-linejoin="round" stroke-linecap="round"/>
<polyline points="141.7,113.1 144.5,114.0 147.0,114.1 148.3,115.0" fill="none" stroke="#d5e7eb" stroke-width="1.199265479878149" stroke-linejoin="round" stroke-linecap="round"/>
<polyline points="150.4,129.7 154.3,129.8 156.8,128.5 159.2,129.0" fill="none" stroke="#d5e7eb" stroke-width="1.6258517838289765" stroke-linejoin="round" stroke-linecap="round"/>
<polyline points="137.8,56.4 142.7,57.0 147.2,56.3 153.4,57.1" fill="none" stroke="#d5e7eb" stroke-width="1.37392294238915" stroke-linejoin="round" stroke-linecap="round"/>
<polyline points="153.3,144.6 157.4,145.1 161.7,145.7 166.6,146.3" fill="none" stroke="#d5e7eb" stroke-width="1.2771112974790892" stroke-linejoin="round" stroke-linecap="round"/>
<polyline points="138.4,54.7 141.5,55.4 144.3,56.1 147.2,56.0" fill="none" stroke="#d5e7eb" stroke-width="1.3711559270284497" stroke-linejoin="round" stroke-linecap="round"/>
<polyline points="135.1,42.1 137.7,40.2 139.7,39.6 141.9,38.1" fill="none" stroke="#d5e7eb" stroke-width="1.3665138414327331" stroke-linejoin="round" stroke-linecap="round"/>
<polyline points="137.5,102.2 139.0,101.7 141.6,101.7 143.8,102.3" fill="none" stroke="#d5e7eb" stroke-width="1.7212392326968309" stroke-linejoin="round" stroke-linecap="round"/>
<polyline points="136.3,89.6 140.2,89.4 143.8,89.2 148.2,89.5" fill="none" stroke="#d5e7eb" stroke-width="1.688881933602534" stroke-linejoin="round" stroke-linecap="round"/>
<polyline points="152.5,145.5 156.7,145.9 159.4,147.1 162.1,147.7" fill="none" stroke="#d5e7eb" stroke-width="0.965808690275407" stroke-linejoin="round" stroke-linecap="round"/>
<polyline points="142.4,115.0 147.5,113.6 151.4,112.8 157.0,110.4" fill="none" stroke="#d5e7eb" stroke-width="1.7572537160270878" stroke-linejoin="round" stroke-linecap="round"/>
<polyline points="135.4,84.6 139.9,85.7 145.0,86.7 149.6,87.5" fill="none" stroke="#d5e7eb" stroke-width="1.5499357516270673" stroke-linejoin="round" stroke-linecap="round"/>
<polyline points="135.9,42.2 138.4,41.0 141.4,38.4 145.3,37.5" fill="none" stroke="#d5e7eb" stroke-width="1.7745263627823666" stroke-linejoin="round" stroke-linecap="round"/>
<polyline points="133.9,51.7 135.2,51.2 136.8,52.6 139.2,52.3" fill="none" stroke="#d5e7eb" stroke-width="1.0344311526636705" stroke-linejoin="round" stroke-linecap="round"/>
<polyline points="153.5,142.9 156.5,141.7 160.2,138.9 165.0,137.5" fill="none" stroke="#d5e7eb" stroke-width="1.6214657324142507" stroke-linejoin="round" stroke-linecap="round"/>
<polyline points="138.0,49.4 139.7,49.5 141.7,51.1 143.1,50.7" fill="none" stroke="#d5e7eb" stroke-width="1.3742235238744547" stroke-linejoin="round" stroke-linecap="round"/>
<polyline points="132.8,66.7 134.2,65.3 135.8,64.9 137.4,63.9" fill="none" stroke="#d5e7eb" stroke-width="1.0601098957916357" stroke-linejoin="round" stroke-linecap="round"/>
<polyline points="132.1,78.9 134.9,77.8 136.5,76.5 139.7,74.4" fill="none" stroke="#d5e7eb" stroke-width="1.6370281263075426" stroke-linejoin="round" stroke-linecap="round"/>
<polyline points="135.5,88.4 140.2,88.2 145.8,87.1 151.1,86.9" fill="none" stroke="#d5e7eb" stroke-width="1.4723792539965133" stroke-linejoin="round" stroke-linecap="round"/>
<polyline points="134.4,85.3 135.3,85.2 136.5,83.7 137.4,83.8" fill="none" stroke="#d5e7eb" stroke-width="1.6834840391229735" stroke-linejoin="round" stroke-linecap="round"/>
<polyline points="139.0,115.1 141.4,113.7 143.7,112.5 147.2,113.1" fill="none" stroke="#d5e7eb" stroke-width="1.3923660367070176" stroke-linejoin="round" stroke-linecap="round"/>
<polyline points="137.7,12.6 142.6,12.0 147.4,9.6" fill="none" stroke="#d5e7eb" stroke-width="1.1289759639675494" stroke-linejoin="round" stroke-linecap="round"/>
<polyline points="134.0,20.6 138.2,20.6 142.4,17.6" fill="none" stroke="#d5e7eb" stroke-width="1.0585012114809942" stroke-linejoin="round" stroke-linecap="round"/>
<polyline points="133.2,7.1 136.4,5.2 139.7,6.0" fill="none" stroke="#d5e7eb" stroke-width="1.0396857399544837" stroke-linejoin="round" stroke-linecap="round"/>
<polyline points="134.2,24.5 141.7,25.1 149.2,25.8" fill="none" stroke="#d5e7eb" stroke-width="1.4274544161404341" stroke-linejoin="round" stroke-linecap="round"/>
<polyline points="132.6,17.6 141.5,16.2 150.4,19.0" fill="none" stroke="#d5e7eb" stroke-width="1.2859316698227177" stroke-linejoin="round" stroke-linecap="round"/>
<polyline points="136.7,5.5 145.0,6.0 153.4,6.9" fill="none" stroke="#d5e7eb" stroke-width="1.3873313494274364" stroke-linejoin="round" stroke-linecap="round"/>
<polyline points="134.2,8.9 140.2,10.2 146.2,10.7" fill="none" stroke="#d5e7eb" stroke-width="1.395845472901188" stroke-linejoin="round" stroke-linecap="round"/>
<polyline points="137.1,24.4 144.2,25.2 151.3,22.8" fill="none" stroke="#d5e7eb" stroke-width="0.9186963157737051" stroke-linejoin="round" stroke-linecap="round"/>
<polyline points="132.9,8.7 136.5,10.0 140.1,9.0" fill="none" stroke="#d5e7eb" stroke-width="1.276660265112701" stroke-linejoin="round" stroke-linecap="round"/>
<polyline points="135.4,25.9 141.4,23.9 147.3,27.7" fill="none" stroke="#d5e7eb" stroke-width="1.3489592221342235" stroke-linejoin="round" stroke-linecap="round"/>
<path d="M312 149 C306 139 314 126 324 122 C332 118 336 126 330 134 C324 142 320 152 312 149z" fill="#d5e7eb"/>
<ellipse cx="349" cy="150" rx="3.2" ry="18" transform="rotate(22 349 150)" fill="#d5e7eb"/>
<ellipse cx="355" cy="41" rx="6" ry="2.6" transform="rotate(30 355 41)" fill="#d5e7eb"/>
<ellipse cx="267.29999999999995" cy="202.60000000000002" rx="1.6" ry="1.2" fill="#faf8f3"/>
<polyline points="135.9,64.5 135.9,74.2 130.3,75.0 127.8,85.5 124.6,104.8 128.6,122.6 143.2,145.2 159.3,164.0 164.6,166.2 180.0,174.5 205.5,175.8 219.6,168.8 245.0,140.7 259.2,129.2 259.2,112.6 257.3,94.7 259.8,87.0" fill="none" stroke="#e8b234" stroke-width="2.6" stroke-linejoin="round" stroke-linecap="round"/>
<text x="188.29999999999995" y="34.200000000000045" font-size="10.8" fill="#8b96a1" font-weight="700" letter-spacing="1.9" font-family="Liberation Sans" >NORWAY</text>
<text x="319" y="103.60000000000002" font-size="10.8" fill="#8b96a1" font-weight="700" letter-spacing="1.6" font-family="Liberation Sans" >SWEDEN</text>
<text x="355" y="117.20000000000005" font-size="10.5" fill="#3c5272" font-weight="700" letter-spacing="0.3" font-family="Liberation Sans" >STOC</text>
<text x="99.60000000000002" y="69.60000000000002" font-size="9.8" fill="#4b5f80" font-weight="700" letter-spacing="0.2" font-family="Liberation Sans" stroke="#f4f7f8" stroke-width="1.6" paint-order="stroke">Bergen</text>
<text x="236" y="91.5" font-size="9.8" fill="#4b5f80" font-weight="700" letter-spacing="0.2" font-family="Liberation Sans" stroke="#f4f7f8" stroke-width="1.6" paint-order="stroke">Oslo</text>
<text x="65.80000000000001" y="216.20000000000005" font-size="11.5" fill="#ffffff" font-weight="700" letter-spacing="0.6" font-family="Liberation Sans" font-style="italic" stroke="#a9c7ce" stroke-width="1.4" paint-order="stroke">North</text>
<path d="M128.3 50 a9.7 9.7 0 1 1 19.4 0 c0 5 -5 8.5 -9.7 14.5 c-4.7 -6 -9.7 -9.5 -9.7 -14.5z" fill="#4d4d4d"/>
<text x="138" y="54" font-size="11.5" fill="#f2f2f2" text-anchor="middle" font-family="Liberation Sans">1</text>
<path d="M251.50000000000006 71.70000000000005 a9.7 9.7 0 1 1 19.4 0 c0 5 -5 8.5 -9.7 14.5 c-4.7 -6 -9.7 -9.5 -9.7 -14.5z" fill="#4d4d4d"/>
<text x="261.20000000000005" y="75.70000000000005" font-size="11.5" fill="#f2f2f2" text-anchor="middle" font-family="Liberation Sans">2</text>
<rect x="11.5" y="11.5" width="31" height="61" rx="4" fill="#fff" stroke="#b7bfc1" stroke-width="2"/>
<line x1="11.5" y1="41.60000000000002" x2="42.5" y2="41.60000000000002" stroke="#d0d0d0" stroke-width="1"/>
<path d="M20.69999999999999 29.299999999999955h13M27.19999999999999 22.799999999999955v13" stroke="#111" stroke-width="2.4"/>
<path d="M20.69999999999999 58.700000000000045h13" stroke="#111" stroke-width="2.4"/>
<rect x="11.5" y="85.79999999999995" width="31" height="31" rx="2" fill="#fff" stroke="#c4c4c4" stroke-width="2"/>
<path d="M18.80000000000001 97.60000000000002V92.60000000000002H23.80000000000001M30.80000000000001 92.60000000000002H35.80000000000001V97.60000000000002M35.80000000000001 104.60000000000002V109.60000000000002H30.80000000000001M23.80000000000001 109.60000000000002H18.80000000000001V104.60000000000002" fill="none" stroke="#111" stroke-width="2.4"/>
</svg>
<div class="b" style="left:792px;top:183px;width:376px;height:442px;background:#f0f5fc;border:1px solid #e8edf4;box-sizing:border-box;border-radius:5px;"></div>
<div class="b" style="left:792px;top:183px;width:376px;height:47px;background:#e3edfb;border-radius:6px 6px 0 0;"></div>
<div class="t" style="top:198.76px;font-size:17.3px;line-height:17.3px;color:#1a62cc;-webkit-text-stroke:0.6px #1a62cc;letter-spacing:-0.392px;left:485.60px;width:800px;text-align:center;">Schedule</div>
<div class="t" style="top:198.76px;font-size:17.3px;line-height:17.3px;color:#444;-webkit-text-stroke:0.6px #444;letter-spacing:-0.366px;left:673.82px;width:800px;text-align:center;">Edit Schedule</div>
<div class="b" style="left:792px;top:228px;width:188px;height:3px;background:#1565d8;"></div>
<div class="t" style="top:250.21px;font-size:11.8px;line-height:11.8px;color:#222;-webkit-text-stroke:0.1px #222;letter-spacing:-0.374px;left:808.00px;">Voyage Start Date</div>
<div class="t" style="top:250.21px;font-size:11.8px;line-height:11.8px;color:#888;-webkit-text-stroke:0.1px #888;letter-spacing:-0.033px;left:970.00px;">Lock</div>
<div class="t" style="top:250.21px;font-size:11.8px;line-height:11.8px;color:#222;-webkit-text-stroke:0.1px #222;letter-spacing:-0.157px;left:1018.20px;">Waiting Days</div>
<div class="t" style="top:250.21px;font-size:11.8px;line-height:11.8px;color:#222;-webkit-text-stroke:0.1px #222;letter-spacing:-0.033px;left:1119.70px;">Lock</div>
<div class="b" style="left:808px;top:265px;width:154px;height:32px;background:#fafafa;border:1px solid #babec2;box-sizing:border-box;border-radius:4px;"></div>
<div class="t" style="top:274.35px;font-size:14px;line-height:14px;color:#222;-webkit-text-stroke:0.1px #222;letter-spacing:0.234px;left:815.00px;">26/05/25 04:47</div>
<svg class="b" style="left:935.8px;top:269.8px;" width="22.8" height="22.8" viewBox="0 0 24 24"><path fill="#6a6a6a" d="M17 12h-5v5h5v-5zM16 1v2H8V1H6v2H5c-1.11 0-1.99.9-1.99 2L3 19c0 1.1.89 2 2 2h14c1.1 0 2-.9 2-2V5c0-1.1-.9-2-2-2h-1V1h-2zm3 18H5V8h14v11z"/></svg>
<div class="b" style="left:973.5px;top:275px;width:17.5px;height:17px;background:#c2c2c2;border-radius:2px;"></div>
<svg class="b" style="left:973.5px;top:275px;" width="17.5" height="17" viewBox="0 0 17.5 17"><path d="M3.5 8.8L7 12.2L14 4.8" stroke="#fff" stroke-width="2.2" fill="none"/></svg>
<div class="b" style="left:1018px;top:265px;width:94px;height:32px;background:#fafafa;border:1px solid #babec2;box-sizing:border-box;border-radius:4px;"></div>
<div class="t" style="top:274.35px;font-size:14px;line-height:14px;color:#222;-webkit-text-stroke:0.1px #222;letter-spacing:-0.016px;right:467.22px;text-align:right;">0.00</div>
<div class="b" style="left:1123.5px;top:275px;width:17.5px;height:17px;background:#1565d8;border-radius:2px;"></div>
<svg class="b" style="left:1123.5px;top:275px;" width="17.5" height="17" viewBox="0 0 17.5 17"><path d="M3.5 8.8L7 12.2L14 4.8" stroke="#fff" stroke-width="2.2" fill="none"/></svg>
<div class="b" style="left:812px;top:309.8px;width:39px;height:16.69999999999999px;background:#fff;border:1px solid #b9b9b9;box-sizing:border-box;border-radius:8.349999999999994px;"></div>
<div class="t" style="top:313.06px;font-size:11.8px;line-height:11.8px;color:#444;-webkit-text-stroke:0.1px #444;letter-spacing:-0.281px;left:431.36px;width:800px;text-align:center;">GMT</div>
<div class="t" style="top:311.97px;font-size:12.2px;line-height:12.2px;color:#262626;-webkit-text-stroke:0.35px #262626;letter-spacing:0.114px;right:610.19px;text-align:right;">26/05/25, 04:47</div>
<div class="b" style="left:979.4px;top:313px;width:1.2000000000000455px;height:79px;background:#2a6ad2;"></div>
<div class="b" style="left:979.5px;top:392px;width:1.0px;height:134px;background:#b0b0b0;"></div>
<svg class="b" style="left:971.8px;top:304.8px;" width="16.4" height="16.4" viewBox="0 0 16.4 16.4"><circle cx="8.2" cy="8.2" r="8.2" fill="#1565d8"/><text x="8.2" y="12.3" font-size="11.5" fill="#fff" text-anchor="middle" font-family="Liberation Sans">B</text></svg>
<svg class="b" style="left:971.8px;top:391.6px;" width="16.4" height="16.4" viewBox="0 0 16.4 16.4"><circle cx="8.2" cy="8.2" r="8.2" fill="#c1c1c1"/><text x="8.2" y="12.3" font-size="11.5" fill="#fff" text-anchor="middle" font-family="Liberation Sans">1</text></svg>
<svg class="b" style="left:971.8px;top:517.8px;" width="16.4" height="16.4" viewBox="0 0 16.4 16.4"><circle cx="8.2" cy="8.2" r="8.2" fill="#c1c1c1"/><text x="8.2" y="12.3" font-size="11.5" fill="#fff" text-anchor="middle" font-family="Liberation Sans">2</text></svg>
<div class="t" style="top:312.48px;font-size:11.6px;line-height:11.6px;color:#262626;-webkit-text-stroke:0.4px #262626;letter-spacing:-0.765px;left:998.50px;">BERGEN</div>
<div class="t" style="top:330.59px;font-size:12.3px;line-height:12.3px;color:#333;-webkit-text-stroke:0.1px #333;letter-spacing:-0.039px;left:998.50px;">Ballast</div>
<div class="b" style="left:932.3px;top:370.4px;width:29.40000000000009px;height:17.100000000000023px;background:#fff;border:1px solid #b9b9b9;box-sizing:border-box;border-radius:8.550000000000011px;"></div>
<div class="t" style="top:373.86px;font-size:11.8px;line-height:11.8px;color:#444;-webkit-text-stroke:0.1px #444;letter-spacing:-0.116px;left:546.94px;width:800px;text-align:center;">0 d</div>
<div class="b" style="left:998.3px;top:370.4px;width:85.10000000000014px;height:17.100000000000023px;background:#fff;border:1px solid #b9b9b9;box-sizing:border-box;border-radius:8.550000000000011px;"></div>
<div class="t" style="top:373.86px;font-size:11.8px;line-height:11.8px;color:#444;-webkit-text-stroke:0.1px #444;letter-spacing:-0.097px;left:1004.33px;">0.00 kn</div>
<div class="t" style="top:373.86px;font-size:11.8px;line-height:11.8px;color:#444;-webkit-text-stroke:0.1px #444;letter-spacing:-0.054px;left:1051.36px;">0 nm</div>
<div class="b" style="left:1046.4px;top:374.4px;width:1.0px;height:9.100000000000023px;background:#b0b0b0;"></div>
<div class="t" style="top:398.67px;font-size:12.2px;line-height:12.2px;color:#262626;-webkit-text-stroke:0.35px #262626;letter-spacing:0.067px;right:610.23px;text-align:right;">ETA 26/05/25, 04:47</div>
<div class="t" style="top:417.67px;font-size:12.2px;line-height:12.2px;color:#262626;-webkit-text-stroke:0.35px #262626;letter-spacing:-0.052px;right:610.35px;text-align:right;">ETD 26/05/25, 04:47</div>
<div class="t" style="top:399.18px;font-size:11.6px;line-height:11.6px;color:#262626;-webkit-text-stroke:0.4px #262626;letter-spacing:-0.765px;left:998.50px;">BERGEN</div>
<div class="t" style="top:417.09px;font-size:12.3px;line-height:12.3px;color:#333;-webkit-text-stroke:0.1px #333;letter-spacing:-0.103px;left:998.50px;">Loading</div>
<div class="t" style="top:438.17px;font-size:12.2px;line-height:12.2px;color:#666;-webkit-text-stroke:0.1px #666;letter-spacing:-0.054px;left:998.50px;">Port Cost: 0 USD</div>
<div class="t" style="top:456.27px;font-size:12.2px;line-height:12.2px;color:#666;-webkit-text-stroke:0.1px #666;letter-spacing:-0.080px;left:998.50px;">Total Days: 0.00</div>
<svg class="b" style="left:1091px;top:455.3px;" width="14.5" height="14.5" viewBox="0 0 24 24"><path fill="#707070" d="M11 7h2v2h-2zm0 4h2v6h-2zm1-9C6.48 2 2 6.48 2 12s4.48 10 10 10 10-4.48 10-10S17.52 2 12 2zm0 18c-4.41 0-8-3.59-8-8s3.59-8 8-8 8 3.59 8 8-3.59 8-8 8z"/></svg>
<div class="b" style="left:842px;top:496.5px;width:119.29999999999995px;height:16.899999999999977px;background:#fff;border:1px solid #b9b9b9;box-sizing:border-box;border-radius:8.449999999999989px;"></div>
<div class="t" style="top:499.86px;font-size:11.8px;line-height:11.8px;color:#444;-webkit-text-stroke:0.1px #444;letter-spacing:-0.168px;left:501.57px;width:800px;text-align:center;">1.61 d + 0.16 d Extra</div>
<div class="b" style="left:998.3px;top:496.5px;width:98.29999999999995px;height:16.899999999999977px;background:#fff;border:1px solid #b9b9b9;box-sizing:border-box;border-radius:8.449999999999989px;"></div>
<div class="t" style="top:499.86px;font-size:11.8px;line-height:11.8px;color:#444;-webkit-text-stroke:0.1px #444;letter-spacing:-0.097px;left:1004.30px;">9.09 kn</div>
<div class="t" style="top:499.86px;font-size:11.8px;line-height:11.8px;color:#444;-webkit-text-stroke:0.1px #444;letter-spacing:-0.015px;left:1051.33px;">387 nm</div>
<div class="b" style="left:1046.3px;top:500.5px;width:1.0px;height:8.899999999999977px;background:#b0b0b0;"></div>
<div class="t" style="top:524.67px;font-size:12.2px;line-height:12.2px;color:#262626;-webkit-text-stroke:0.35px #262626;letter-spacing:0.067px;right:610.23px;text-align:right;">ETA 27/05/25, 23:20</div>
<div class="t" style="top:543.67px;font-size:12.2px;line-height:12.2px;color:#262626;-webkit-text-stroke:0.35px #262626;letter-spacing:-0.052px;right:610.35px;text-align:right;">ETD 27/05/25, 23:20</div>
<div class="t" style="top:525.18px;font-size:11.6px;line-height:11.6px;color:#262626;-webkit-text-stroke:0.4px #262626;letter-spacing:-0.676px;left:998.50px;">OSLO</div>
<div class="t" style="top:543.09px;font-size:12.3px;line-height:12.3px;color:#333;-webkit-text-stroke:0.1px #333;letter-spacing:-0.095px;left:998.50px;">Discharging</div>
<div class="t" style="top:564.27px;font-size:12.2px;line-height:12.2px;color:#666;-webkit-text-stroke:0.1px #666;letter-spacing:-0.054px;left:998.50px;">Port Cost: 0 USD</div>
<div class="t" style="top:582.27px;font-size:12.2px;line-height:12.2px;color:#666;-webkit-text-stroke:0.1px #666;letter-spacing:-0.080px;left:998.50px;">Total Days: 0.00</div>
<svg class="b" style="left:1091px;top:581.3px;" width="14.5" height="14.5" viewBox="0 0 24 24"><path fill="#707070" d="M11 7h2v2h-2zm0 4h2v6h-2zm1-9C6.48 2 2 6.48 2 12s4.48 10 10 10 10-4.48 10-10S17.52 2 12 2zm0 18c-4.41 0-8-3.59-8-8s3.59-8 8-8 8 3.59 8 8-3.59 8-8 8z"/></svg>
<div class="b" style="left:1184px;top:183px;width:376px;height:829px;background:#f0f5fc;border:1px solid #e8edf4;box-sizing:border-box;border-radius:5px;"></div>
<div class="t" style="top:206.86px;font-size:17.3px;line-height:17.3px;color:#1a1a1a;-webkit-text-stroke:0.6px #1a1a1a;letter-spacing:-0.608px;left:1200.60px;">P&amp;L Summary (USD)</div>
<svg class="b" style="left:1378px;top:205px;" width="20" height="20" viewBox="0 0 20 20"><rect x="1.1" y="7" width="3.9" height="10.9" rx="1.95" fill="#6d6d6d"/><rect x="7.2" y="1.9" width="3.9" height="16" rx="1.95" fill="#6d6d6d"/><rect x="13.1" y="11.1" width="4.2" height="6.8" rx="2" fill="#6d6d6d"/></svg>
<svg class="b" style="left:1410px;top:203px;" width="26" height="26" viewBox="0 0 26 26"><path d="M2.8 17.4L7.4 10L10.4 15.4L14.5 7.2L16 9.8M18.6 10L23.4 2.6" fill="none" stroke="#a6aab0" stroke-width="1.7"/><circle cx="17.3" cy="16.4" r="3.5" fill="none" stroke="#a6aab0" stroke-width="1.7"/><path d="M19.9 19.2L23.4 22.6" stroke="#a6aab0" stroke-width="1.8"/></svg>
<svg class="b" style="left:1534.2px;top:210.2px;" width="14" height="10" viewBox="0 0 14 10"><path d="M1.5 8 L7 2.5 L12.5 8" fill="none" stroke="#555" stroke-width="1.8"/></svg>
<div class="t" style="top:260.62px;font-size:12.5px;line-height:12.5px;color:#2a2a2a;font-weight:700;letter-spacing:-0.458px;left:1204.20px;">Freight</div>
<div class="t" style="top:260.62px;font-size:12.5px;line-height:12.5px;color:#2a2a2a;font-weight:700;right:35.70px;text-align:right;">1,171,109</div>
<div class="t" style="top:284.42px;font-size:12.5px;line-height:12.5px;color:#2a2a2a;-webkit-text-stroke:0.1px #2a2a2a;letter-spacing:0.032px;left:1204.20px;">Adjustment</div>
<div class="t" style="top:284.42px;font-size:12.5px;line-height:12.5px;color:#2a2a2a;-webkit-text-stroke:0.1px #2a2a2a;letter-spacing:0.068px;right:35.63px;text-align:right;">0</div>
<div class="t" style="top:307.42px;font-size:12.5px;line-height:12.5px;color:#2a2a2a;-webkit-text-stroke:0.1px #2a2a2a;letter-spacing:0.032px;left:1204.20px;">Various</div>
<div class="t" style="top:307.42px;font-size:12.5px;line-height:12.5px;color:#2a2a2a;-webkit-text-stroke:0.1px #2a2a2a;letter-spacing:0.068px;right:35.63px;text-align:right;">0</div>
<div class="t" style="top:331.32px;font-size:12.5px;line-height:12.5px;color:#2a2a2a;-webkit-text-stroke:0.1px #2a2a2a;letter-spacing:-0.245px;left:1204.20px;">Demurrage</div>
<div class="t" style="top:331.32px;font-size:12.5px;line-height:12.5px;color:#2a2a2a;-webkit-text-stroke:0.1px #2a2a2a;letter-spacing:0.068px;right:35.63px;text-align:right;">0</div>
<div class="b" style="left:1184px;top:349px;width:376px;height:28px;background:#b3eacf;"></div>
<div class="b" style="left:1184px;top:349px;width:376px;height:1px;background:#bcd2c7;"></div>
<div class="b" style="left:1184px;top:376px;width:376px;height:1px;background:#bcd2c7;"></div>
<div class="t" style="top:355.42px;font-size:12.5px;line-height:12.5px;color:#10261a;font-weight:700;letter-spacing:-0.575px;left:1204.20px;">Gross Revenue</div>
<div class="t" style="top:355.42px;font-size:12.5px;line-height:12.5px;color:#10261a;font-weight:700;right:35.70px;text-align:right;">1,171,109</div>
<div class="t" style="top:382.42px;font-size:12.5px;line-height:12.5px;color:#2a2a2a;-webkit-text-stroke:0.1px #2a2a2a;letter-spacing:-0.006px;left:1204.20px;">Commission</div>
<div class="t" style="top:382.42px;font-size:12.5px;line-height:12.5px;color:#2a2a2a;-webkit-text-stroke:0.1px #2a2a2a;letter-spacing:-0.120px;right:35.82px;text-align:right;">43,331</div>
<div class="t" style="top:405.72px;font-size:12.5px;line-height:12.5px;color:#2a2a2a;-webkit-text-stroke:0.1px #2a2a2a;letter-spacing:-0.160px;left:1204.20px;">Despatch</div>
<div class="t" style="top:405.72px;font-size:12.5px;line-height:12.5px;color:#2a2a2a;-webkit-text-stroke:0.1px #2a2a2a;letter-spacing:0.068px;right:35.63px;text-align:right;">0</div>
<div class="b" style="left:1184px;top:424px;width:376px;height:28px;background:#b3eacf;"></div>
<div class="b" style="left:1184px;top:424px;width:376px;height:1px;background:#bcd2c7;"></div>
<div class="b" style="left:1184px;top:451px;width:376px;height:1px;background:#bcd2c7;"></div>
<div class="t" style="top:430.42px;font-size:12.5px;line-height:12.5px;color:#10261a;font-weight:700;letter-spacing:-0.428px;left:1204.20px;">Net Revenue</div>
<div class="t" style="top:430.42px;font-size:12.5px;line-height:12.5px;color:#10261a;font-weight:700;right:35.70px;text-align:right;">1,127,778</div>
<div class="t" style="top:457.62px;font-size:12.5px;line-height:12.5px;color:#2a2a2a;-webkit-text-stroke:0.1px #2a2a2a;letter-spacing:-0.069px;left:1204.20px;">Port Cost</div>
<div class="t" style="top:457.62px;font-size:12.5px;line-height:12.5px;color:#2a2a2a;-webkit-text-stroke:0.1px #2a2a2a;letter-spacing:0.068px;right:35.63px;text-align:right;">0</div>
<div class="t" style="top:480.72px;font-size:12.5px;line-height:12.5px;color:#2a2a2a;-webkit-text-stroke:0.1px #2a2a2a;letter-spacing:-0.224px;left:1204.20px;">Canal Cost</div>
<div class="t" style="top:480.72px;font-size:12.5px;line-height:12.5px;color:#2a2a2a;-webkit-text-stroke:0.1px #2a2a2a;letter-spacing:0.068px;right:35.63px;text-align:right;">0</div>
<div class="t" style="top:504.42px;font-size:12.5px;line-height:12.5px;color:#2a2a2a;-webkit-text-stroke:0.1px #2a2a2a;letter-spacing:-0.485px;left:1204.20px;">ILOHC</div>
<div class="t" style="top:504.42px;font-size:12.5px;line-height:12.5px;color:#2a2a2a;-webkit-text-stroke:0.1px #2a2a2a;letter-spacing:0.068px;right:35.63px;text-align:right;">0</div>
<div class="t" style="top:527.32px;font-size:12.5px;line-height:12.5px;color:#2a2a2a;-webkit-text-stroke:0.1px #2a2a2a;letter-spacing:-0.106px;left:1204.20px;">Handling Cost</div>
<div class="t" style="top:527.32px;font-size:12.5px;line-height:12.5px;color:#2a2a2a;-webkit-text-stroke:0.1px #2a2a2a;letter-spacing:0.068px;right:35.63px;text-align:right;">0</div>
<div class="t" style="top:560.32px;font-size:12.5px;line-height:12.5px;color:#2a2a2a;-webkit-text-stroke:0.1px #2a2a2a;letter-spacing:0.032px;left:1206.20px;">Various</div>
<div class="b" style="left:1467px;top:552px;width:69px;height:25px;background:#fafafa;border:1px solid #babec2;box-sizing:border-box;border-radius:4px;"></div>
<div class="t" style="top:556.65px;font-size:14px;line-height:14px;color:#222;-webkit-text-stroke:0.1px #222;letter-spacing:0.076px;right:42.42px;text-align:right;">0</div>
<div class="t" style="top:584.22px;font-size:12.5px;line-height:12.5px;color:#2a2a2a;-webkit-text-stroke:0.1px #2a2a2a;letter-spacing:-0.131px;left:1204.20px;">Freight Cost</div>
<div class="t" style="top:584.22px;font-size:12.5px;line-height:12.5px;color:#2a2a2a;-webkit-text-stroke:0.1px #2a2a2a;letter-spacing:0.068px;right:35.63px;text-align:right;">0</div>
<div class="b" style="left:1200px;top:610px;width:344px;height:1px;background:#d0d6de;"></div>
<div class="t" style="top:617.57px;font-size:11.5px;line-height:11.5px;color:#333;-webkit-text-stroke:0.1px #333;letter-spacing:-0.284px;right:195.28px;text-align:right;">Price (USD)</div>
<div class="t" style="top:617.57px;font-size:11.5px;line-height:11.5px;color:#333;-webkit-text-stroke:0.1px #333;letter-spacing:-0.098px;right:115.10px;text-align:right;">Qty (MT)</div>
<div class="t" style="top:617.57px;font-size:11.5px;line-height:11.5px;color:#333;-webkit-text-stroke:0.1px #333;letter-spacing:-0.281px;right:35.28px;text-align:right;">Cost (USD)</div>
<div class="t" style="top:642.62px;font-size:12.5px;line-height:12.5px;color:#2a2a2a;-webkit-text-stroke:0.1px #2a2a2a;letter-spacing:-0.557px;left:1206.20px;">LS MGO</div>
<div class="b" style="left:1286px;top:633px;width:91px;height:25px;background:#fafafa;border:1px solid #babec2;box-sizing:border-box;border-radius:4px;"></div>
<div class="t" style="top:638.65px;font-size:14px;line-height:14px;color:#222;-webkit-text-stroke:0.1px #222;letter-spacing:0.015px;right:201.99px;text-align:right;">860.00</div>
<div class="t" style="top:642.72px;font-size:12.5px;line-height:12.5px;color:#333;-webkit-text-stroke:0.1px #333;letter-spacing:0.013px;right:114.99px;text-align:right;">17.734</div>
<div class="t" style="top:642.72px;font-size:12.5px;line-height:12.5px;color:#333;-webkit-text-stroke:0.1px #333;letter-spacing:-0.120px;right:35.82px;text-align:right;">15,251</div>
<div class="t" style="top:675.72px;font-size:12.5px;line-height:12.5px;color:#2a2a2a;-webkit-text-stroke:0.1px #2a2a2a;letter-spacing:-0.689px;left:1206.20px;">BD</div>
<div class="b" style="left:1286px;top:666px;width:91px;height:25px;background:#fafafa;border:1px solid #babec2;box-sizing:border-box;border-radius:4px;"></div>
<div class="t" style="top:671.65px;font-size:14px;line-height:14px;color:#222;-webkit-text-stroke:0.1px #222;letter-spacing:-0.016px;right:202.02px;text-align:right;">0.00</div>
<div class="t" style="top:675.72px;font-size:12.5px;line-height:12.5px;color:#333;-webkit-text-stroke:0.1px #333;right:115.00px;text-align:right;">0.000</div>
<div class="t" style="top:675.72px;font-size:12.5px;line-height:12.5px;color:#333;-webkit-text-stroke:0.1px #333;letter-spacing:0.068px;right:35.63px;text-align:right;">0</div>
<div class="t" style="top:706.72px;font-size:12.5px;line-height:12.5px;color:#2a2a2a;font-weight:700;letter-spacing:-0.527px;left:1204.20px;">Bunker Cost</div>
<div class="t" style="top:706.72px;font-size:12.5px;line-height:12.5px;color:#2a2a2a;font-weight:700;letter-spacing:0.067px;right:35.63px;text-align:right;">15,251</div>
<div class="b" style="left:1200px;top:733px;width:344px;height:1px;background:#d0d6de;"></div>
<div class="t" style="top:748.52px;font-size:12.5px;line-height:12.5px;color:#2a2a2a;-webkit-text-stroke:0.1px #2a2a2a;letter-spacing:-0.812px;left:1206.30px;">EU ETS</div>
<div class="b" style="left:1286px;top:740px;width:91px;height:25px;background:#fafafa;border:1px solid #babec2;box-sizing:border-box;border-radius:4px;"></div>
<div class="t" style="top:745.35px;font-size:14px;line-height:14px;color:#222;-webkit-text-stroke:0.1px #222;letter-spacing:0.015px;right:231.49px;text-align:right;">700.00</div>
<div class="t" style="top:745.35px;font-size:14px;line-height:14px;color:#777;-webkit-text-stroke:0.1px #777;letter-spacing:-1.304px;right:203.30px;text-align:right;">EUR</div>
<div class="t" style="top:748.52px;font-size:12.5px;line-height:12.5px;color:#333;-webkit-text-stroke:0.1px #333;letter-spacing:0.013px;right:115.49px;text-align:right;">39.798</div>
<div class="t" style="top:748.52px;font-size:12.5px;line-height:12.5px;color:#333;-webkit-text-stroke:0.1px #333;letter-spacing:-0.120px;right:35.82px;text-align:right;">31,806</div>
<div class="t" style="top:781.22px;font-size:12.5px;line-height:12.5px;color:#2a2a2a;-webkit-text-stroke:0.1px #2a2a2a;letter-spacing:-0.541px;left:1206.30px;">Fuel EU</div>
<div class="b" style="left:1286px;top:773px;width:91px;height:25px;background:#fafafa;border:1px solid #babec2;box-sizing:border-box;border-radius:4px;"></div>
<div class="t" style="top:778.35px;font-size:14px;line-height:14px;color:#222;-webkit-text-stroke:0.1px #222;letter-spacing:-0.220px;left:1293.00px;">2,400...</div>
<div class="t" style="top:778.35px;font-size:14px;line-height:14px;color:#777;-webkit-text-stroke:0.1px #777;letter-spacing:-1.304px;right:203.30px;text-align:right;">EUR</div>
<div class="t" style="top:781.22px;font-size:12.5px;line-height:12.5px;color:#333;-webkit-text-stroke:0.1px #333;right:115.50px;text-align:right;">0.263</div>
<div class="t" style="top:781.22px;font-size:12.5px;line-height:12.5px;color:#333;-webkit-text-stroke:0.1px #333;letter-spacing:0.068px;right:35.63px;text-align:right;">721</div>
<div class="b" style="left:1184px;top:804px;width:376px;height:65px;background:#b3eacf;"></div>
<div class="b" style="left:1184px;top:804px;width:376px;height:1px;background:#bcd2c7;"></div>
<div class="b" style="left:1184px;top:868px;width:376px;height:1px;background:#bcd2c7;"></div>
<div class="t" style="top:835.32px;font-size:12.5px;line-height:12.5px;color:#10261a;font-weight:700;letter-spacing:-0.544px;left:1204.20px;">TCE</div>
<div class="b" style="left:1259px;top:827px;width:121px;height:25px;background:#fafafa;border:1px solid #babec2;box-sizing:border-box;border-radius:4px;"></div>
<div class="t" style="top:832.35px;font-size:14px;line-height:14px;color:#222;-webkit-text-stroke:0.1px #222;letter-spacing:-0.105px;right:199.10px;text-align:right;">609,015</div>
<div class="t" style="top:811.27px;font-size:11.5px;line-height:11.5px;color:#2a2a2a;-webkit-text-stroke:0.1px #2a2a2a;letter-spacing:-0.032px;left:999.58px;width:800px;text-align:center;">Lock</div>
<div class="b" style="left:1391.7px;top:833.3px;width:17.0px;height:17.0px;background:#1565d8;border-radius:2px;"></div>
<svg class="b" style="left:1391.7px;top:833.3px;" width="17" height="17" viewBox="0 0 17 17"><path d="M3.5 8.8L7 12.2L13.5 4.8" stroke="#fff" stroke-width="2.2" fill="none"/></svg>
<div class="t" style="top:815.67px;font-size:11.5px;line-height:11.5px;color:#10261a;font-weight:700;letter-spacing:-0.444px;right:36.14px;text-align:right;">Contribution</div>
<div class="t" style="top:835.32px;font-size:12.5px;line-height:12.5px;color:#10261a;font-weight:700;right:35.70px;text-align:right;">1,080,000</div>
<div class="t" style="top:874.72px;font-size:12.5px;line-height:12.5px;color:#2a2a2a;-webkit-text-stroke:0.1px #2a2a2a;letter-spacing:-0.234px;left:1204.20px;">Hire Payable</div>
<div class="t" style="top:874.72px;font-size:12.5px;line-height:12.5px;color:#2a2a2a;-webkit-text-stroke:0.1px #2a2a2a;letter-spacing:0.068px;right:35.63px;text-align:right;">0</div>
<div class="t" style="top:897.52px;font-size:12.5px;line-height:12.5px;color:#2a2a2a;-webkit-text-stroke:0.1px #2a2a2a;letter-spacing:-0.121px;left:1204.20px;">Ballast Bonus</div>
<div class="t" style="top:897.52px;font-size:12.5px;line-height:12.5px;color:#2a2a2a;-webkit-text-stroke:0.1px #2a2a2a;letter-spacing:0.068px;right:35.63px;text-align:right;">0</div>
<div class="t" style="top:921.42px;font-size:12.5px;line-height:12.5px;color:#2a2a2a;-webkit-text-stroke:0.1px #2a2a2a;letter-spacing:-0.839px;left:1204.20px;">CVE</div>
<div class="t" style="top:921.42px;font-size:12.5px;line-height:12.5px;color:#2a2a2a;-webkit-text-stroke:0.1px #2a2a2a;letter-spacing:0.068px;right:35.63px;text-align:right;">0</div>
<div class="b" style="left:1184px;top:939px;width:376px;height:57px;background:#b3eacf;"></div>
<div class="b" style="left:1184px;top:939px;width:376px;height:1px;background:#bcd2c7;"></div>
<div class="b" style="left:1184px;top:995px;width:376px;height:1px;background:#bcd2c7;"></div>
<div class="t" style="top:946.57px;font-size:11.5px;line-height:11.5px;color:#10261a;font-weight:700;letter-spacing:-0.468px;right:36.17px;text-align:right;">Result</div>
<div class="t" style="top:971.02px;font-size:12.5px;line-height:12.5px;color:#10261a;font-weight:700;letter-spacing:-0.300px;left:1204.20px;">Result / Day</div>
<div class="t" style="top:971.02px;font-size:12.5px;line-height:12.5px;color:#10261a;font-weight:700;letter-spacing:0.097px;left:1320.20px;">609,015</div>
<div class="b" style="left:1436px;top:962px;width:100px;height:25px;background:#fafafa;border:1px solid #babec2;box-sizing:border-box;border-radius:4px;"></div>
<div class="t" style="top:967.45px;font-size:14px;line-height:14px;color:#222;-webkit-text-stroke:0.1px #222;letter-spacing:-0.205px;right:43.20px;text-align:right;">1,080,000</div>
</body></html>
